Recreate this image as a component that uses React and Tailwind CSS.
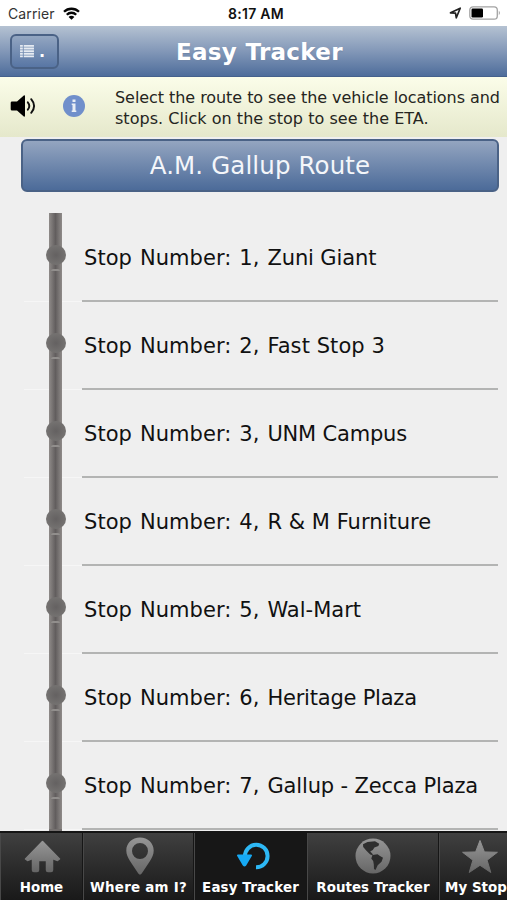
const stops = [
  ['Stop Number: 1, ', 'Zuni Giant', 'tracking-[-0.12px]'],
  ['Stop Number: 2, ', 'Fast Stop 3', 'tracking-[0.08px]'],
  ['Stop Number: 3, ', 'UNM Campus', 'tracking-[-0.2px]'],
  ['Stop Number: 4, ', 'R & M Furniture', 'tracking-[0.02px]'],
  ['Stop Number: 5, ', 'Wal-Mart', 'tracking-[0px]'],
  ['Stop Number: 6, ', 'Heritage Plaza', 'tracking-[-0.22px]'],
  ['Stop Number: 7, ', 'Gallup - Zecca Plaza', 'tracking-[-0.15px]'],
];

function StatusBar() {
  return (
    <div className="grid h-[26px] shrink-0 grid-cols-3 items-center bg-white pl-[8px] pr-[6px] pt-[2px] font-['Inter',sans-serif] text-[14px] leading-none text-[#111]">
      <div className="flex items-center gap-[8px]">
        <span className="tracking-[0.1px] text-[#333]">Carrier</span>
        <svg className="mt-[-2px]" width="17" height="13" viewBox="0 0 17 13" fill="none" stroke="#050505" strokeWidth="2.3">
          <path d="M1 4.8a10.700 10.700 0 0 1 15 0" />
          <path d="M3.800 7.700a6.700 6.700 0 0 1 9.400 0" />
          <path d="M8.500 12.800L5.600 10a3.900 3.900 0 0 1 5.800 0z" fill="#050505" stroke="none" />
        </svg>
      </div>
      <div className="whitespace-nowrap pl-[3px] text-center text-[14px] font-semibold tracking-[0.3px]">8:17 AM</div>
      <div className="mt-[-2px] flex items-center justify-end gap-[7px]">
        <svg width="13" height="12" viewBox="0 0 13 12" fill="none" stroke="#222" strokeWidth="1.7" strokeLinejoin="round">
          <path d="M1.500 5.800L11.200 1.200 7.300 10.800 6.500 6.200z" />
        </svg>
        <svg width="32" height="14" viewBox="0 0 32 14">
          <rect x="0.8" y="0.8" width="27.5" height="12.4" rx="3.2" fill="#fff" stroke="#a3a3a3" strokeWidth="1.3" />
          <rect x="2.5" y="2.5" width="11.5" height="9" rx="1.2" fill="#000" />
          <path d="M29.800 4.800q2 2.200 0 4.400z" fill="#999" />
        </svg>
      </div>
    </div>
  );
}

function Header() {
  return (
    <header className="flex h-[51px] shrink-0 items-center border-b border-[#45618c] bg-linear-to-b from-[#b5c2d2] via-[#8398b8] to-[#4e6d9b] pl-[10px]">
      <button className="flex h-[35px] w-[49px] shrink-0 items-center rounded-[6px] border-2 border-[#4a6286] bg-linear-to-b from-[#93a6c1] to-[#5876a4] pl-[8px] pt-[1px]">
        <svg width="14" height="13" viewBox="0 0 15 14" fill="#e6ebf2">
          <path d="M0 0h3v2H0zM4 0h11v2H4zM0 2.800h3v2H0zM4 2.800h11v2H4zM0 5.600h3v2H0zM4 5.600h11v2H4zM0 8.400h3v2H0zM4 8.400h11v2H4zM0 11.200h3v2H0zM4 11.200h11v2H4z" />
        </svg>
        <span className="ml-[5px] text-[16px] font-bold leading-none text-white">.</span>
      </button>
      <h1 className="ml-[117px] mt-[2px] whitespace-nowrap text-[23px] font-bold leading-none tracking-[0.3px] text-white [text-shadow:0_1px_1px_#6f86a8]">Easy Tracker</h1>
    </header>
  );
}

function InfoBar() {
  return (
    <div className="flex h-[60px] shrink-0 items-center bg-linear-to-b from-[#fbfde9] to-[#e5e8cb] pl-[10px]">
      <svg className="mt-[-2px] shrink-0" width="27" height="24" viewBox="0 0 27 24">
        <path d="M2 7.500h5L13.800 1.600q1.200-.8 1.200.8v19.200q0 1.600-1.200.8L7 16.500H2q-1.300 0-1.300-1.300V8.800Q.7 7.500 2 7.500z" fill="#000" />
        <g fill="none" stroke="#111" strokeWidth="1.900" strokeLinecap="round">
          <path d="M17.800 8.300q3 3.700 0 7.400" />
          <path d="M21.200 5.200q5.800 6.800 0 13.600" />
        </g>
      </svg>
      <svg className="ml-[26px] mt-[-3px] shrink-0" width="22" height="22" viewBox="0 0 22 22">
        <circle cx="11" cy="11" r="11" fill="#708fcb" />
        <path d="M9.500 4.500h3v2.500h-3zM8.700 8.600h3.800v6.900h.8v1.400H8.700v-1.400h.8v-5.500h-.8z" fill="#e9eef5" />
      </svg>
      <p className="ml-[30px] mt-[3px] whitespace-nowrap text-[16px] leading-[20.5px] text-[#252521]">
        <span className="tracking-[-0.06px]">Select the route to see the vehicle locations and</span>
        <br />
        <span className="tracking-[0.035px]">stops. Click on the stop to see the ETA.</span>
      </p>
    </div>
  );
}

function Stop({ prefix, name, tracking }) {
  return (
    <li className="flex h-[88px] shrink-0">
      <div className="h-[89px] w-[25px] shrink-0 border-b border-[#f6f6f6]" />
      <div className="flex w-[13px] shrink-0 flex-col items-center bg-linear-to-r from-[#8f8b89] via-[#625e5e] to-[#8f8b89] pt-[32px]">
        <div className="size-[20px] shrink-0 rounded-full bg-radial from-[#646161] to-[#7c7a78]" />
        <div className="mt-[4px] h-[2px] w-[9px] rounded-t-full bg-[#918e8c]" />
      </div>
      <div className="h-[89px] w-[20px] shrink-0 border-b border-[#f6f6f6]" />
      <div className="h-[89px] w-[416px] whitespace-pre border-b-2 border-[#b3b4b3] pl-[2px] pt-[35px] text-[21px] leading-[21px] text-[#111]">
        <span className="tracking-[0.06px] [word-spacing:1.2px]">{prefix}</span>
        <span className={tracking}>{name}</span>
      </div>
    </li>
  );
}

const icons = {
  home: (
    <svg width="37" height="33" viewBox="0 0 37 33" fill="url(#glyph)" stroke="url(#glyph)">
      <path d="M18.500 1.500L1.500 19l2 1.500 5-2V30q0 1.500 1.500 1.500h3q1.500 0 1.500-1.500V20.500h8V30q0 1.500 1.500 1.500h3q1.500 0 1.500-1.500V18.500l5 2 2-1.500z" strokeWidth="1.500" strokeLinejoin="round" />
    </svg>
  ),
  pin: (
    <svg width="28" height="38" viewBox="0 0 28 38" fill="url(#glyph)">
      <path fillRule="evenodd" d="M14 .5C6 .5.300 6.200.300 13.500c0 4 1.700 7.300 3.700 10.600l8.300 12.500q1.700 2.300 3.400 0L24 24.100c2-3.300 3.700-6.600 3.700-10.600C27.700 6.200 22 .5 14 .5zm0 5.500a8 8 0 1 1 0 16 8 8 0 0 1 0-16z" />
    </svg>
  ),
  refresh: (
    <svg width="34" height="30" viewBox="0 0 34 30">
      <path d="M9 15.500A11.300 11.300 0 1 1 20 26.300" fill="none" stroke="#2db8f5" strokeWidth="4" />
      <path d="M2 13.500h13q1.800 0 .8 1.600l-5.600 9.300q-1.700 2-3.400 0L1.200 15.100Q.2 13.500 2 13.500z" fill="#16a9f4" />
    </svg>
  ),
  globe: (
    <svg width="36" height="36" viewBox="0 0 36 36">
      <circle cx="18" cy="18" r="17.500" fill="url(#glyph)" />
      <path d="M8 6.200L12.500 4l7.500-.7 4.200 2.500-.8 2.200-4 1.500-1.600 2.500-2.600 1.600 2 2 1 2-3-1.200-4-3.800-3-3.500z" fill="#2f2f2f" />
      <path d="M17.500 17l5-.8 2.500 1.700 3 1.800-1.500 4-3.800 3.500L20.500 32l-1.500-1-.2-4.500-.6-3.500-1.900-2.500z" fill="#2b2b2b" />
    </svg>
  ),
  star: (
    <svg width="38" height="35" viewBox="0 0 38 35" fill="url(#glyph)" stroke="url(#glyph)">
      <path d="M19 1.500l4.400 11.400 13 .4-10.300 7.900 3.700 12.300L19 26.300 8.200 33.500l3.700-12.300L1.600 13.300l13-.4z" strokeLinejoin="round" />
    </svg>
  ),
};

function Tab({ icon, label, width, iconTop, tracking, active }) {
  return (
    <div className={`flex h-full shrink-0 flex-col items-center border-r border-r-[#161616] border-l border-l-[#484848] ${width} ${active ? 'bg-[#171717]' : 'bg-linear-to-b from-[#404040] to-[#191919]'}`}>
      <div className={`h-[46px] ${iconTop}`}>{icon}</div>
      <span className={`whitespace-nowrap text-[13.4px] font-bold leading-[17px] text-white ${tracking}`}>{label}</span>
    </div>
  );
}

export default function App() {
  return (
    <div className="flex h-[900px] w-[507px] flex-col overflow-hidden bg-[#efefef] font-['DejaVu_Sans',sans-serif]">
      <svg width="0" height="0" className="absolute">
        <linearGradient id="glyph" x1="0" y1="0" x2="0" y2="1">
          <stop stopColor="#969696" />
          <stop offset="1" stopColor="#666" />
        </linearGradient>
      </svg>
      <StatusBar />
      <Header />
      <InfoBar />
      <button className="mt-[2px] ml-[21px] h-[53px] w-[478px] shrink-0 rounded-[6px] border-2 border-[#4a6286] bg-linear-to-b from-[#94a5c0] to-[#4c6b99] pt-[2px] text-[24.5px] leading-none tracking-[0.12px] text-[#f4f6fa]">
        A.M. Gallup Route
      </button>
      <ul className="mt-[21px] flex min-h-0 flex-1 flex-col overflow-hidden pl-[24px]">
        {stops.map(([prefix, name, tracking]) => (
          <Stop key={name} prefix={prefix} name={name} tracking={tracking} />
        ))}
        <li className="flex h-[2px] shrink-0">
          <div className="ml-[25px] w-[13px] bg-[#74706f]" />
        </li>
      </ul>
      <nav className="flex h-[69px] shrink-0 overflow-hidden border-t-2 border-[#151515] bg-[#282828]">
        <Tab label="Home" icon={icons.home} width="w-[83px]" iconTop="pt-[7px] pl-[2px]" tracking="tracking-[0px]" />
        <Tab label="Where am I?" icon={icons.pin} width="w-[111px]" iconTop="pt-[4px] pl-[2px]" tracking="tracking-[0.25px]" />
        <Tab label="Easy Tracker" icon={icons.refresh} width="w-[113px]" iconTop="pt-[8px] pl-[4px]" tracking="tracking-[0.15px]" active />
        <Tab label="Routes Tracker" icon={icons.globe} width="w-[132px]" iconTop="pt-[5px]" tracking="tracking-[0.05px]" />
        <Tab label="My Stops" icon={icons.star} width="w-[82px]" iconTop="pt-[6px]" tracking="tracking-[0.05px]" />
      </nav>
    </div>
  );
}
